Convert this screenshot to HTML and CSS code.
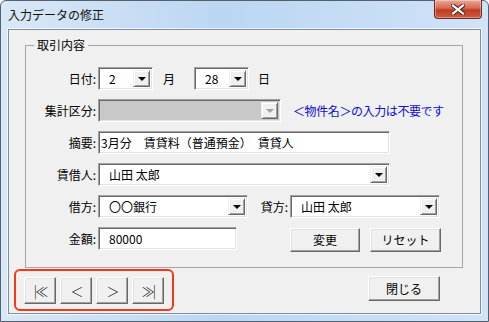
FILE: index.html
```html
<!DOCTYPE html>
<html lang="ja">

<head>
  <meta charset="UTF-8">
  <title>入力データの修正</title>
  <link rel="stylesheet" href="styles.css">
</head>

<body>
  <div class="window">
    <div class="titlebar">
      <span class="title">入力データの修正</span>
      <div class="close-x">
        <svg width="14" height="11" viewBox="0 0 14 11">
          <path d="M2 1.5L12 9.5M12 1.5L2 9.5" stroke="#4a2a24" stroke-width="4.2" stroke-linecap="square" />
          <path d="M2 1.5L12 9.5M12 1.5L2 9.5" stroke="#ffffff" stroke-width="2.2" stroke-linecap="square" />
        </svg>
      </div>
    </div>

    <div class="client">
      <fieldset class="group">
        <legend>取引内容</legend>

        <div class="row">
          <span class="lbl">日付:</span>
          <div class="combo w-day"><span class="val">2</span><span class="drop"></span></div>
          <span class="unit gap-month">月</span>
          <div class="combo w-day"><span class="val">28</span><span class="drop"></span></div>
          <span class="unit gap-day">日</span>
        </div>

        <div class="row">
          <span class="lbl">集計区分:</span>
          <div class="combo w-kubun disabled"><span class="val"></span><span class="drop"></span></div>
          <span class="note">＜物件名＞の入力は不要です</span>
        </div>

        <div class="row">
          <span class="lbl">摘要:</span>
          <div class="textbox w-wide"><span class="val flush">3月分　賃貸料（普通預金）　賃貸人</span></div>
        </div>

        <div class="row">
          <span class="lbl">賃借人:</span>
          <div class="combo w-wide"><span class="val">山田 太郎</span><span class="drop"></span></div>
        </div>

        <div class="row">
          <span class="lbl">借方:</span>
          <div class="combo w-half"><span class="val">〇〇銀行</span><span class="drop"></span></div>
          <span class="lbl-sub">貸方:</span>
          <div class="combo w-half"><span class="val">山田 太郎</span><span class="drop"></span></div>
        </div>

        <div class="row">
          <span class="lbl">金額:</span>
          <div class="textbox w-amount"><span class="val">80000</span></div>
          <button class="btn btn-change">変更</button>
          <button class="btn btn-reset">リセット</button>
        </div>
      </fieldset>

      <div class="footer">
        <div class="nav-mark">
          <button class="btn nav">|≪</button>
          <button class="btn nav">＜</button>
          <button class="btn nav">＞</button>
          <button class="btn nav">≫|</button>
        </div>
        <button class="btn btn-close">閉じる</button>
      </div>
    </div>
  </div>
</body>

</html>
```

FILE: styles.css
```css
body {
  margin: 0;
  font-family: "Noto Sans CJK JP", "Noto Sans", sans-serif;
  font-size: 12px;
  color: #000;
}

.window {
  width: 489px;
  height: 322px;
  box-sizing: border-box;
  border: 1px solid #55606c;
  border-radius: 6px 6px 0 0;
  background: linear-gradient(to right, #d9e8f7, #bcd6f2 45%, #c6ddf5 75%, #d0e3f7);
  padding: 0 7px 7px 7px;
  display: flex;
  flex-direction: column;
}

/* title bar */
.titlebar {
  height: 28px;
  display: flex;
  justify-content: space-between;
  align-items: flex-start;
  flex-shrink: 0;
}

.title {
  margin-top: 5px;
  font-size: 12px;
  line-height: 18px;
  color: #111;
}

.close-x {
  width: 46px;
  height: 18px;
  margin-top: -1px;
  margin-right: -1px;
  border: 1px solid #6b2b22;
  border-top: none;
  border-radius: 0 0 4px 4px;
  background: linear-gradient(to bottom, #e9a898, #d66a52 45%, #c13b24 55%, #cf5a3e);
  box-shadow: inset 0 0 0 1px rgba(255, 255, 255, 0.35);
  display: flex;
  align-items: center;
  justify-content: center;
}

/* client area */
.client {
  flex: 1;
  background: #f0f0f0;
  border: 1px solid #7d8fa3;
  box-shadow: 0 0 0 1px rgba(255, 255, 255, 0.7);
  display: flex;
  flex-direction: column;
}

.group {
  margin: 7px 0 0 16px;
  width: 438px;
  box-sizing: border-box;
  border: 1px solid #a6a6a6;
  padding: 14px 0 17px 0;
}

.group legend {
  margin-left: 8px;
  padding: 0 3px;
  font-size: 12px;
  line-height: 16px;
}

.row {
  display: flex;
  align-items: center;
  height: 23px;
  margin-bottom: 9px;
}

.row:last-child {
  margin-bottom: 0;
}

.lbl {
  width: 70px;
  text-align: right;
  margin-right: 2px;
}

.lbl-sub {
  width: 31px;
  margin-left: 9px;
  margin-right: 2px;
  text-align: right;
}

.unit.gap-month {
  margin: 0 19px 0 10px;
}

.unit.gap-day {
  margin-left: 9px;
}

.note {
  margin-left: 12px;
  color: #0c0cd2;
  letter-spacing: -0.4px;
}

/* sunken fields */
.combo,
.textbox {
  height: 23px;
  box-sizing: border-box;
  background: #fff;
  border: 1px solid;
  border-color: #a0a0a0 #ffffff #ffffff #a0a0a0;
  box-shadow: inset 1px 1px 0 #696969, inset -1px -1px 0 #e3e3e3;
  padding: 2px;
  display: flex;
  align-items: center;
}

.val {
  flex: 1;
  white-space: pre;
  line-height: 17px;
  padding-left: 8px;
}

.val.flush {
  padding-left: 0;
}

.drop {
  align-self: stretch;
  width: 15px;
  background: #f0f0f0;
  border: 1px solid;
  border-color: #f0f0f0 #696969 #696969 #f0f0f0;
  box-shadow: inset 1px 1px 0 #fff, inset -1px -1px 0 #a0a0a0;
  display: flex;
  align-items: center;
  justify-content: center;
}

.drop::after {
  content: "";
  border-left: 4px solid transparent;
  border-right: 4px solid transparent;
  border-top: 4px solid #000;
}

.combo.disabled {
  background: #c8c8c8;
}

.combo.disabled .drop::after {
  border-top-color: #a0a0a0;
}

.w-day {
  width: 55px;
}

.w-kubun {
  width: 183px;
}

.w-wide {
  width: 292px;
}

.w-half {
  width: 150px;
}

.w-amount {
  width: 139px;
}

/* raised buttons */
.btn {
  font-family: inherit;
  font-size: 12px;
  color: #000;
  background: #f0f0f0;
  box-sizing: border-box;
  border: 1px solid;
  border-color: #ffffff #696969 #696969 #ffffff;
  box-shadow: inset -1px -1px 0 #a0a0a0, inset 1px 1px 0 #e3e3e3;
  padding: 0;
  margin: 0;
}

.btn-change {
  width: 70px;
  height: 24px;
  margin-left: 53px;
  margin-top: 2px;
}

.btn-reset {
  width: 71px;
  height: 24px;
  margin-left: 10px;
  margin-top: 2px;
}

/* bottom */
.footer {
  display: flex;
  align-items: flex-start;
  margin-top: 1px;
}

.nav-mark {
  margin-left: 5px;
  border: 2px solid #f2391a;
  border-radius: 6px;
  padding: 6px 8px 5px 8px;
  display: flex;
  gap: 4px;
}

.btn.nav {
  width: 32px;
  height: 27px;
  font-size: 13px;
  font-weight: 300;
  letter-spacing: -2px;
}

.btn-close {
  margin-left: auto;
  margin-right: 40px;
  margin-top: 7px;
  width: 72px;
  height: 25px;
}
```
